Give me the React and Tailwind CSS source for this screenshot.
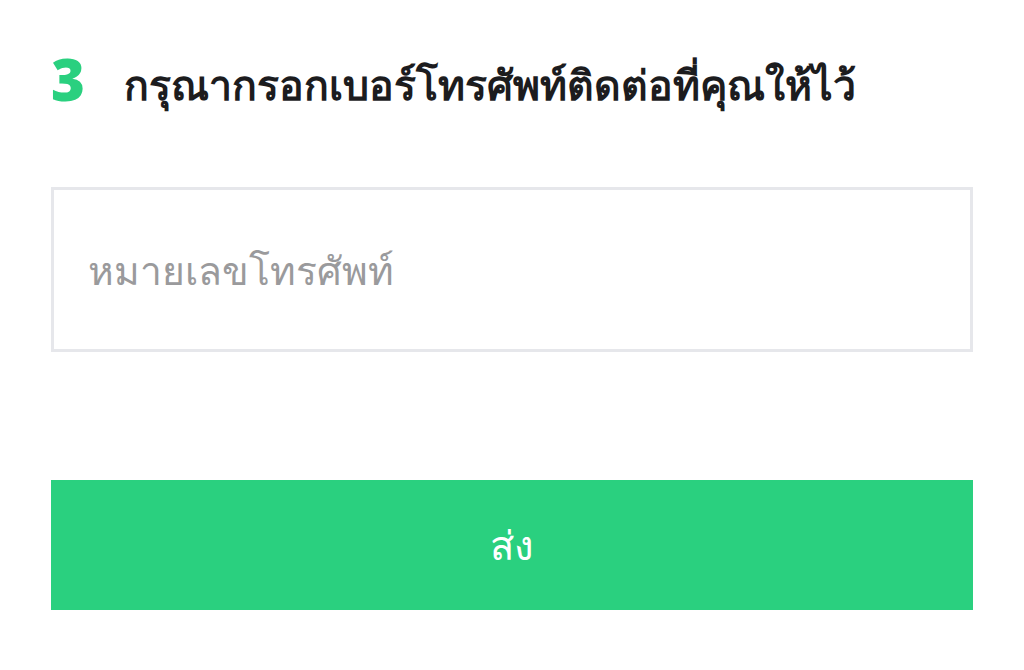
export default function App() {
  return (
    <div className="min-h-[670px] w-[1024px] bg-white px-[51px] pt-[47px] font-['Noto_Sans','Liberation_Sans',sans-serif]">
      <div className="flex items-start gap-[37px]">
        <span className="mt-[3px] w-[36px] text-[58px] font-black leading-none text-[#2ad07f]">3</span>
        <h1 className="mt-[5px] text-[41px] font-bold leading-[64px] text-[#1c1c1e]">
          กรุณากรอกเบอร์โทรศัพท์ติดต่อที่คุณให้ไว้
        </h1>
      </div>
      <div className="mt-[71px]">
        <input
          type="tel"
          placeholder="หมายเลขโทรศัพท์"
          className="h-[165px] w-full border-[3px] border-[#e6e7eb] bg-white px-[34px] text-[39px] text-[#1c1c1e] outline-none placeholder:text-[#9a9a9c]"
        />
      </div>
      <button
        type="button"
        className="mt-[128px] flex h-[130px] w-full items-center justify-center bg-[#2ad07f] text-[40px] font-normal text-white"
      >
        ส่ง
      </button>
    </div>
  );
}
